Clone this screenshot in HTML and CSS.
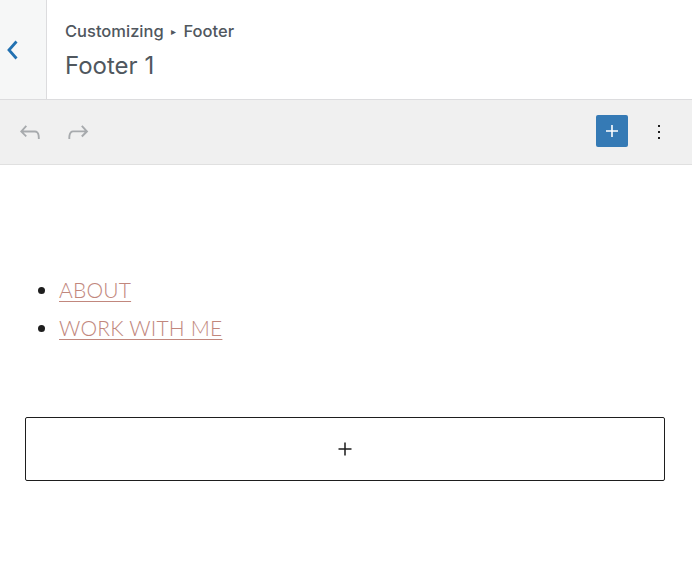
FILE: index.html
```html
<!DOCTYPE html>
<html lang="en">
<head>
    <meta charset="UTF-8">
    <meta name="viewport" content="width=device-width, initial-scale=1.0">
    <title>Footer 1</title>
    <link rel="stylesheet" href="styles.css">
</head>
<body>
    <header class="section-header">
        <button class="back-btn" aria-label="Back">
            <svg width="14" height="22" viewBox="0 0 14 22"><path d="M11.5 2.5L4 11l7.5 8.5" fill="none" stroke="#2271b1" stroke-width="2.8"/></svg>
        </button>
        <div class="section-title">
            <span class="crumb">Customizing <span class="arrow">&#9656;</span> Footer</span>
            <h1>Footer 1</h1>
        </div>
    </header>

    <div class="toolbar">
        <div class="history">
            <button class="icon-btn" aria-label="Undo">
                <svg width="30" height="30" viewBox="0 0 24 24"><path d="M18.3 11.7c-.6-.6-1.4-.9-2.3-.9H6.7l2.9-3.3-1.1-1-4.5 5L8.5 16l1-1-2.7-2.7H16c.5 0 .9.2 1.3.5 1 1 1 3.4 1 4.5v.3h1.5v-.2c0-1.5 0-4.3-1.5-5.7z" fill="#a7aaad"/></svg>
            </button>
            <button class="icon-btn" aria-label="Redo">
                <svg width="30" height="30" viewBox="0 0 24 24"><path d="M15.6 6.5l-1.1 1 2.9 3.3H8c-.9 0-1.7.3-2.3.9-1.4 1.5-1.4 4.2-1.4 5.6v.2h1.5v-.3c0-1.1 0-3.5 1-4.5.3-.3.7-.5 1.3-.5h9.2L14.5 15l1.1 1.1 4.6-4.6-4.6-5z" fill="#a7aaad"/></svg>
            </button>
        </div>
        <div class="actions">
            <button class="add-btn" aria-label="Add block">
                <svg width="24" height="24" viewBox="0 0 24 24"><path d="M18 11.2h-5.2V6h-1.6v5.2H6v1.6h5.2V18h1.6v-5.2H18z" fill="#fff"/></svg>
            </button>
            <button class="dots-btn" aria-label="Options">
                <svg width="24" height="24" viewBox="0 0 24 24"><path d="M13 19h-2v-2h2v2zm0-6h-2v-2h2v2zm0-6h-2V5h2v2z" fill="#1e1e1e"/></svg>
            </button>
        </div>
    </div>

    <main class="editor">
        <ul class="menu">
            <li><a href="#">ABOUT</a></li>
            <li><a href="#">WORK WITH ME</a></li>
        </ul>
        <button class="appender" aria-label="Add block">
            <svg width="26" height="26" viewBox="0 0 24 24"><path d="M18 11.3h-5.3V6h-1.4v5.3H6v1.4h5.3V18h1.4v-5.3H18z" fill="#1e1e1e"/></svg>
        </button>
    </main>
</body>
</html>
```

FILE: styles.css
```css
*{
    margin: 0;
    padding: 0;
    box-sizing: border-box;
}
body{
    width: 692px;
    height: 584px;
    background-color: white;
    font-family: Inter, "Noto Sans", Arial, sans-serif;
    overflow: hidden;
}
button{
    border: none;
    background: none;
    cursor: pointer;
    display: flex;
    align-items: center;
    justify-content: center;
}

.section-header{
    display: flex;
    height: 100px;
    border-bottom: 1px solid #dcdcde;
}
.back-btn{
    width: 47px;
    height: 99px;
    background-color: #f6f7f7;
    border-right: 1px solid #dcdcde;
    justify-content: flex-start;
    padding-left: 5px;
}
.section-title{
    padding: 21px 0 0 18px;
    color: #50575e;
}
.crumb{
    display: block;
    font-size: 16.5px;
    font-weight: 500;
    line-height: 20px;
    color: #50575e;
}
.arrow{
    font-size: 10px;
    margin: 0 3px;
    vertical-align: 2px;
}
.section-title h1{
    font-size: 24px;
    font-weight: 400;
    line-height: 30px;
    margin-top: 10px;
}

.toolbar{
    height: 65px;
    background-color: #f0f0f0;
    border-bottom: 1px solid #e0e0e0;
    display: flex;
    align-items: center;
    justify-content: space-between;
    padding: 0 21px 0 15px;
}
.history, .actions{
    display: flex;
    align-items: center;
    gap: 18px;
}
.actions{
    gap: 19px;
}
.icon-btn{
    width: 30px;
    height: 32px;
}
.dots-btn{
    width: 24px;
    height: 32px;
}
.add-btn{
    width: 32px;
    height: 32px;
    background-color: #357ab5;
    border-radius: 2px;
    margin-bottom: 2px;
}

.editor{
    padding: 106px 27px 0 25px;
}
.menu{
    list-style: disc;
    padding-left: 34px;
    font-family: Lato, "Open Sans", sans-serif;
    font-size: 21px;
    font-weight: 300;
    line-height: 38px;
    color: #1e1e1e;
}
.menu a{
    color: #c1877d;
    text-decoration: underline;
    text-underline-offset: 3px;
    text-decoration-thickness: 1px;
    letter-spacing: 0.2px;
}
.appender{
    margin-top: 70px;
    width: 640px;
    height: 64px;
    border: 1px solid #1e1e1e;
    border-radius: 2px;
}
```
